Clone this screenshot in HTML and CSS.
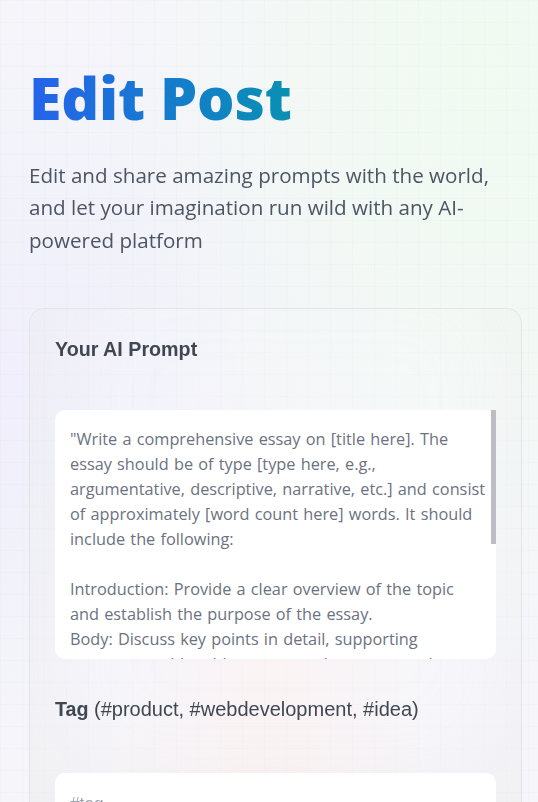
FILE: index.html
```html
<!DOCTYPE html>
<html lang="en">
<head>
    <meta charset="UTF-8">
    <meta name="viewport" content="width=device-width, initial-scale=1.0">
    <title>Edit Post</title>
    <link rel="stylesheet" href="styles.css">
</head>
<body>

    <div class="bg-grid"></div>

    <section class="page">
        <h1 class="head-text"><span class="blue-gradient">Edit Post</span></h1>
        <p class="desc">Edit and share amazing prompts with the world, and let your imagination run wild with any AI-powered platform</p>

        <form class="post-form">
            <label class="field">
                <span class="field-label">Your AI Prompt</span>
                <div class="prompt-box">
                    <textarea class="form-textarea">"Write a comprehensive essay on [title here]. The essay should be of type [type here, e.g., argumentative, descriptive, narrative, etc.] and consist of approximately [word count here] words. It should include the following:

Introduction: Provide a clear overview of the topic and establish the purpose of the essay.
Body: Discuss key points in detail, supporting arguments with evidence, examples, or reasoning. Each paragraph should focus on a single idea.
Conclusion: Summarize the main points and restate the thesis in a new light, leaving the reader with a final thought.

Use a formal tone, clear language and smooth transitions between sections. Cite any sources where appropriate."</textarea>
                    <span class="scroll-thumb"></span>
                </div>
            </label>

            <label class="field field-tag">
                <span class="field-label">Tag <span class="field-hint">(#product, #webdevelopment, #idea)</span></span>
                <input type="text" class="form-input" placeholder="#tag">
            </label>
        </form>
    </section>

</body>
</html>
```

FILE: styles.css
```css
body { margin: 0; min-height: 100vh; overflow: hidden; background-color: #f5f5fa; background-image: radial-gradient(ellipse at 90% 8%, rgba(240, 251, 240, 0.95) 0, transparent 55%), radial-gradient(ellipse at 0% 45%, rgba(239, 238, 251, 0.9) 0, transparent 55%), radial-gradient(ellipse at 50% 95%, rgba(251, 240, 240, 0.95) 0, transparent 45%); font-family: "Open Sans", "Noto Sans", sans-serif; }
.bg-grid { position: fixed; inset: 0; background-image: linear-gradient(rgba(120, 120, 160, 0.025) 1px, transparent 1px), linear-gradient(90deg, rgba(120, 120, 160, 0.025) 1px, transparent 1px); background-size: 22px 22px; pointer-events: none; }
.page { position: relative; padding: 64px 16px 0 29px; display: flex; flex-direction: column; }

.head-text { margin: 0; font-size: 59px; line-height: 1.15; font-weight: 800; letter-spacing: -0.2px; }
.blue-gradient { background: linear-gradient(90deg, #2563eb, #0891b2); -webkit-background-clip: text; background-clip: text; color: transparent; }
.desc { margin: 27px 0 0; font-size: 20.6px; line-height: 32.5px; color: #4b5563; }

.post-form { margin-top: 52px; padding: 25px; display: flex; flex-direction: column; gap: 35px; border: 1px solid #e3e4ea; border-radius: 15px; background: rgba(255, 255, 255, 0.2); box-shadow: inset 12px -60px 115px 0 rgba(199, 199, 199, 0.18); }
.field { display: flex; flex-direction: column; gap: 46px; }
.field-tag { gap: 49px; }
.field-label { font-family: "Liberation Sans", Arial, sans-serif; font-size: 19.7px; line-height: 30px; font-weight: 700; color: #3f4753; }
.field-hint { font-weight: 400; font-size: 20px; }

.prompt-box { position: relative; display: flex; }
.form-textarea { flex: 1; height: 249px; box-sizing: border-box; padding: 16.5px 9px 15px 15px; border: none; border-radius: 10px; outline: 0; resize: none; background: white; font-family: "Open Sans", "Noto Sans", sans-serif; font-size: 16.3px; line-height: 25px; word-spacing: 1px; color: #6b7280; }
.form-textarea::-webkit-scrollbar { display: none; }
.scroll-thumb { position: absolute; top: 0; right: 0; width: 5px; height: 134px; background: #bcbec4; }
.form-input { height: 60px; box-sizing: border-box; padding: 15px; border: none; border-radius: 10px; outline: 0; background: white; font-family: "Liberation Sans", Arial, sans-serif; font-size: 17.3px; color: #374151; }
.form-input::placeholder { color: #9ca3af; }
```
